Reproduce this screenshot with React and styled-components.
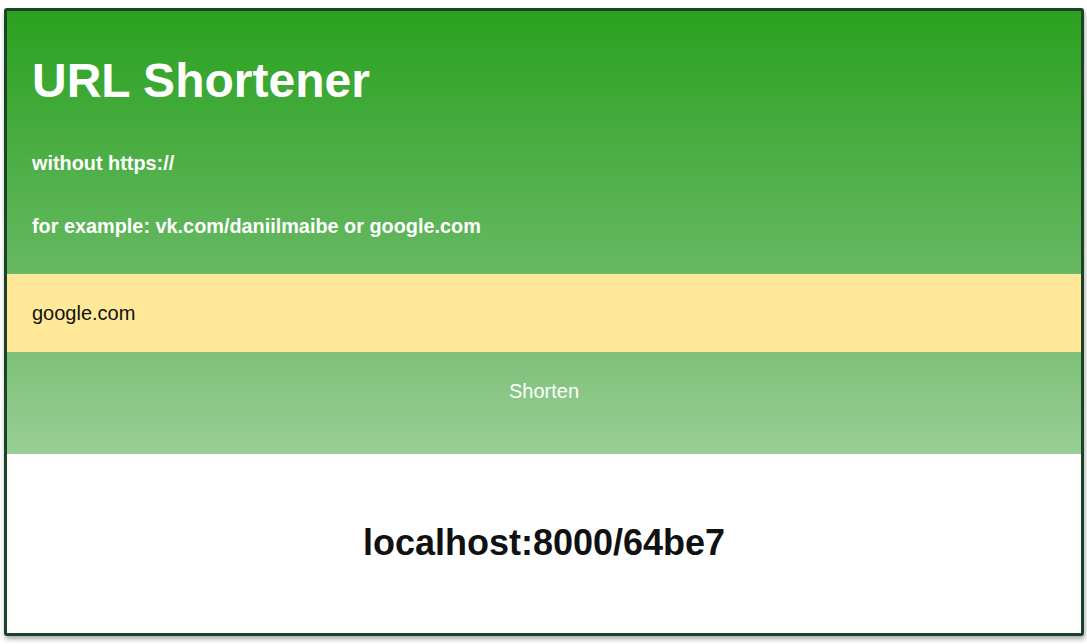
import React, { useState } from "react";
import styled, { createGlobalStyle } from "styled-components";

const Global = createGlobalStyle`
  html, body { margin: 0; padding: 0; background: #ffffff; }
  body {
    padding: 8px 3px 8px 4px;
    font-family: "Liberation Sans", Arial, sans-serif;
  }
`;

const Card = styled.div`
  box-sizing: border-box;
  width: 100%;
  border: 3px solid #1b4426;
  border-radius: 3px;
  overflow: hidden;
  background: #ffffff;
  box-shadow: 1px 3px 5px rgba(0, 0, 0, 0.35);
  display: flex;
  flex-direction: column;
`;

const Header = styled.header`
  padding: 42px 25px 36px;
  background: linear-gradient(to bottom, #2aa11f 0%, #67b963 100%);
  color: #ffffff;
  display: flex;
  flex-direction: column;
`;

const Title = styled.h1`
  margin: 0 0 44px;
  font-size: 48px;
  line-height: 55px;
  font-weight: 700;
`;

const Hint = styled.p`
  margin: 0;
  font-size: 19.85px;
  line-height: 23px;
  font-weight: 700;
  & + & { margin-top: 40px; }
`;

const UrlInput = styled.input`
  box-sizing: border-box;
  display: block;
  width: 100%;
  height: 78px;
  margin: 0;
  padding: 0 25px;
  border: none;
  outline: none;
  background: #ffe999;
  color: #111111;
  font-family: "Liberation Sans", Arial, sans-serif;
  font-size: 20px;
`;

const ShortenButton = styled.button`
  display: block;
  width: 100%;
  margin: 0;
  padding: 28px 0 51px;
  border: none;
  background: linear-gradient(to bottom, #7fc179 0%, #98ce95 100%);
  color: #ffffff;
  font-family: "Liberation Sans", Arial, sans-serif;
  font-size: 20px;
  line-height: 23px;
  text-align: center;
  cursor: pointer;
`;

const Result = styled.h2`
  margin: 0;
  padding: 68px 0 70px;
  font-size: 36px;
  line-height: 41px;
  font-weight: 700;
  color: #111111;
  text-align: center;
`;

export default function App() {
  const [url, setUrl] = useState("google.com");
  return (
    <>
      <Global />
      <Card>
        <Header>
          <Title>URL Shortener</Title>
          <Hint>without https://</Hint>
          <Hint>for example: vk.com/daniilmaibe or google.com</Hint>
        </Header>
        <UrlInput value={url} onChange={(e) => setUrl(e.target.value)} />
        <ShortenButton type="button">Shorten</ShortenButton>
        <Result>localhost:8000/64be7</Result>
      </Card>
    </>
  );
}
